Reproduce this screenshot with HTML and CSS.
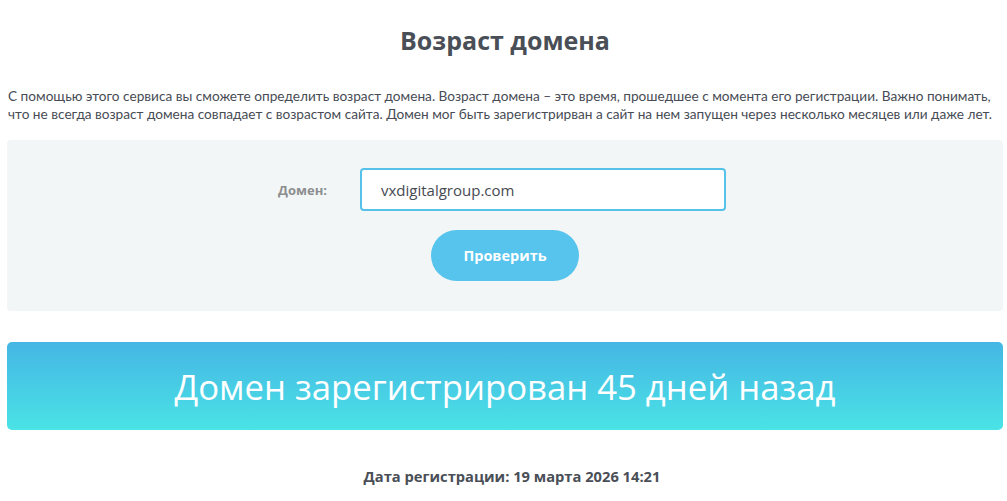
FILE: index.html
```html
<!DOCTYPE html>
<html lang="ru">
<head>
<meta charset="utf-8">
<title>Возраст домена</title>
<link rel="stylesheet" href="styles.css">
</head>
<body>
<div class="page">
  <h1 class="title">Возраст домена</h1>
  <p class="intro">С помощью этого сервиса вы сможете определить возраст домена. Возраст домена – это время, прошедшее с момента его регистрации. Важно понимать, что не всегда возраст домена совпадает с возрастом сайта. Домен мог быть зарегистрирван а сайт на нем запущен через несколько месяцев или даже лет.</p>
  <form class="panel">
    <div class="row">
      <label class="label" for="domain">Домен:</label>
      <input class="field" id="domain" type="text" value="vxdigitalgroup.com">
    </div>
    <button class="btn" type="button">Проверить</button>
  </form>
  <div class="result">Домен зарегистрирован 45 дней назад</div>
  <p class="date">Дата регистрации: 19 марта 2026 14:21</p>
</div>
</body>
</html>
```
FILE: styles.css
```css
* { box-sizing: border-box; }
html, body { margin: 0; padding: 0; background: #fff; }
.page {
  padding: 0 4px 0 7px;
  font-family: "Open Sans", "DejaVu Sans", sans-serif;
  color: #4a4f57;
}
.title {
  margin: 0;
  padding-top: 24px;
  height: 66px;
  text-align: center;
  font-family: "Open Sans", sans-serif;
  font-weight: 700;
  font-size: 25px;
  line-height: 32px;
  color: #4a4f57;
}
.intro {
  margin: 21px 0 0 1px;
  font-family: "Lato", sans-serif;
  font-size: 13.65px;
  line-height: 18px;
  color: #474c55;
}
.panel {
  margin: 17px 0 0;
  background: #f3f6f7;
  border-radius: 4px;
  height: 171px;
  padding-top: 28px;
  display: flex;
  flex-direction: column;
  align-items: center;
}
.row {
  display: flex;
  align-items: center;
  margin-left: -6px;
}
.label {
  width: 82px;
  font-family: "Open Sans", sans-serif;
  font-weight: 700;
  font-size: 13px;
  color: #8c8e90;
}
.field {
  width: 366px;
  height: 43px;
  border: 2px solid #56c2ea;
  border-radius: 4px;
  background: #fff;
  padding: 0 0 0 19px;
  font-family: "Open Sans", sans-serif;
  font-size: 15px;
  color: #454a52;
  outline: none;
}
.btn {
  margin-top: 19px;
  width: 148px;
  height: 51px;
  border: 0;
  border-radius: 26px;
  background: #56c4ec;
  color: #fff;
  font-family: "Open Sans", sans-serif;
  font-weight: 700;
  font-size: 14.5px;
  cursor: pointer;
}
.result {
  margin-top: 31px;
  height: 88px;
  border-radius: 5px;
  background: linear-gradient(to bottom, #45b6e4, #4ae3e6);
  color: #fff;
  font-family: "Open Sans", sans-serif;
  font-weight: 400;
  font-size: 34.7px;
  display: flex;
  align-items: center;
  justify-content: center;
}
.date {
  margin: 36px 0 0;
  padding-left: 14px;
  text-align: center;
  font-family: "Open Sans", sans-serif;
  font-weight: 700;
  font-size: 14.7px;
  color: #4a4f57;
}
```
